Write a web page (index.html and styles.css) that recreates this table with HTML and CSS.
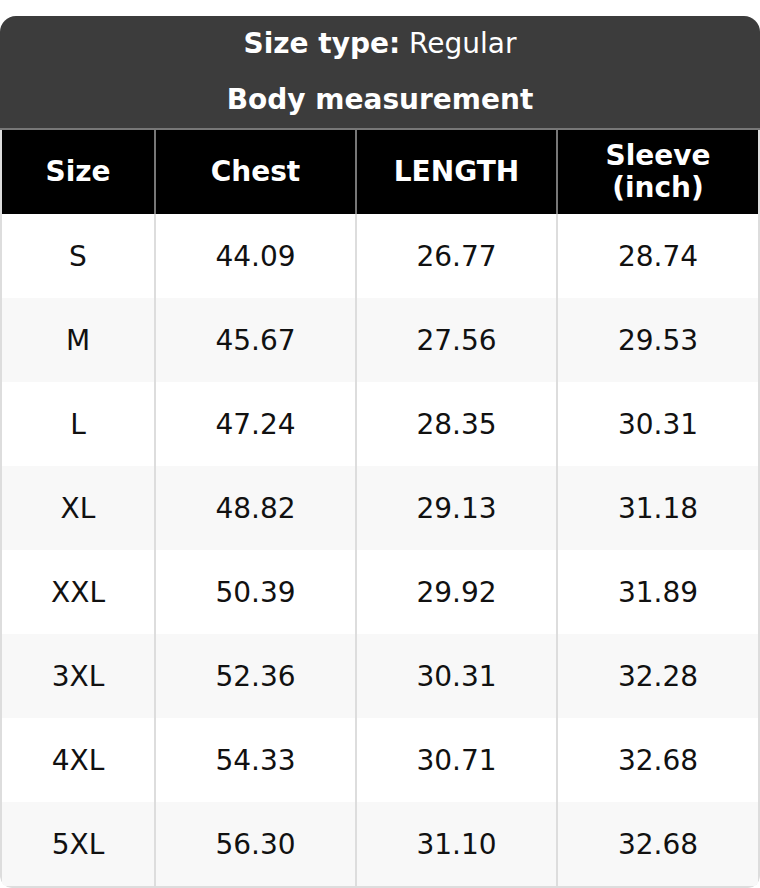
FILE: index.html
```html
<!DOCTYPE html>
<html>
<head>
<meta charset="utf-8">
<link rel="stylesheet" href="styles.css">
</head>
<body>
<div class="sheet">
  <div class="title">
    <div class="title-line"><strong>Size type:</strong> Regular</div>
    <div class="title-line"><strong>Body measurement</strong></div>
  </div>
  <table class="chart">
    <colgroup>
      <col class="c1"><col class="c2"><col class="c3"><col class="c4">
    </colgroup>
    <thead>
      <tr><th>Size</th><th>Chest</th><th>LENGTH</th><th>Sleeve<br>(inch)</th></tr>
    </thead>
    <tbody>
      <tr><td>S</td><td>44.09</td><td>26.77</td><td>28.74</td></tr>
      <tr><td>M</td><td>45.67</td><td>27.56</td><td>29.53</td></tr>
      <tr><td>L</td><td>47.24</td><td>28.35</td><td>30.31</td></tr>
      <tr><td>XL</td><td>48.82</td><td>29.13</td><td>31.18</td></tr>
      <tr><td>XXL</td><td>50.39</td><td>29.92</td><td>31.89</td></tr>
      <tr><td>3XL</td><td>52.36</td><td>30.31</td><td>32.28</td></tr>
      <tr><td>4XL</td><td>54.33</td><td>30.71</td><td>32.68</td></tr>
      <tr><td>5XL</td><td>56.30</td><td>31.10</td><td>32.68</td></tr>
    </tbody>
  </table>
</div>
</body>
</html>
```
FILE: styles.css
```css
html, body {
  margin: 0;
  padding: 0;
  background: #ffffff;
}
body {
  font-family: "DejaVu Sans", sans-serif;
  font-size: 28px;
  color: #111111;
}
.sheet {
  margin-top: 16px;
  width: 760px;
  border-radius: 16px 16px 12px 12px;
  overflow: hidden;
}
.title {
  background: #3c3c3c;
  color: #ffffff;
  text-align: center;
  border-bottom: 2px solid #777777;
}
.title-line {
  height: 56px;
  line-height: 56px;
}
.chart {
  width: 760px;
  table-layout: fixed;
  border-collapse: separate;
  border-spacing: 0;
  border-left: 2px solid #dddddd;
  border-right: 2px solid #dddddd;
  border-bottom: 2px solid #dddddd;
  border-radius: 0 0 12px 12px;
}
.c1 { width: 154px; }
.c2 { width: 201px; }
.c3 { width: 201px; }
.c4 { width: 200px; }
.chart th, .chart td {
  text-align: center;
  padding: 0;
  height: 84px;
  box-sizing: border-box;
}
.chart th {
  background: #000000;
  color: #ffffff;
  font-weight: bold;
  line-height: 32px;
  border-right: 2px solid #777777;
}
.chart td {
  border-right: 2px solid #dddddd;
}
.chart th:last-child, .chart td:last-child {
  border-right: none;
}
.chart tbody tr:nth-child(even) td {
  background: #f8f8f8;
}
```
